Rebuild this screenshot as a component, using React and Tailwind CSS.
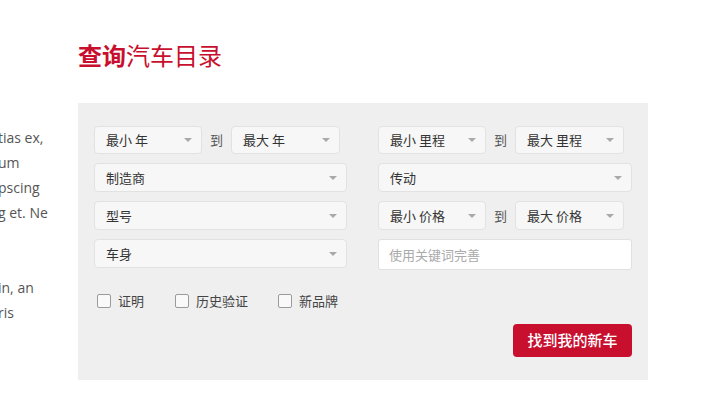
import React from "react";

const cjk = { fontFamily: '"Noto Sans CJK SC", "Noto Sans", sans-serif' };

function Arrow() {
  return (
    <svg width="8" height="4" viewBox="0 0 8 4" className="shrink-0">
      <path d="M0 0 L8 0 L4 4 Z" fill="#a9a9a9" />
    </svg>
  );
}

function Select({ label, w, h = "h-[29px]" }) {
  return (
    <div
      className={`${h} ${w} flex items-center justify-between pl-[11px] pr-[9px] bg-[#f7f7f7] border border-[#e2e2e2] rounded-[4px] text-[13px] text-[#333]`}
    >
      <span className="whitespace-pre">{label}</span>
      <Arrow />
    </div>
  );
}

function RangeRow({ a, b, h = "h-[29px]" }) {
  return (
    <div className="flex items-center">
      <Select label={a} w="w-[108px]" h={h} />
      <span className="w-[29px] text-center text-[13px] text-[#555]">到</span>
      <Select label={b} w="w-[109px]" h={h} />
    </div>
  );
}

function Check({ label, gap }) {
  return (
    <div className={`flex items-center ${gap}`}>
      <span className="w-[14px] h-[14px] border border-[#9a9a9a] rounded-[2px] bg-[#f9f9f9]" />
      <span className="ml-[7px] text-[13px] text-[#444]">{label}</span>
    </div>
  );
}

export default function App() {
  const lines = ["tias ex,", "um", "pscing", "g et. Ne", "", "", "in, an", "ris"];
  return (
    <div className="w-[710px] h-[411px] bg-white overflow-hidden flex" style={cjk}>
      <div className="w-[78px] shrink-0 overflow-hidden pt-[125px]">
        {lines.map((l, i) => (
          <div
            key={i}
            className="h-[25px] leading-[25px] text-[14px] text-[#555] whitespace-nowrap -ml-[2px]"
            style={{ fontFamily: '"Open Sans", sans-serif' }}
          >
            {l}
          </div>
        ))}
      </div>
      <div className="flex flex-col">
        <h1 className="mt-[40px] h-[30px] leading-[30px] text-[24px] text-[#c8102e]">
          <span className="font-bold">查询</span>汽车目录
        </h1>
        <div className="mt-[33px] w-[570px] h-[277px] bg-[#efefef] pt-[23px] px-[16px] flex flex-col">
          <div className="flex gap-[31px]">
            <div className="w-[253px] flex flex-col gap-[9px]">
              <RangeRow a="最小 年" b="最大 年" h="h-[28px]" />
              <Select label="制造商" w="w-[253px]" />
              <Select label="型号" w="w-[253px]" />
              <Select label="车身" w="w-[253px]" />
            </div>
            <div className="w-[254px] flex flex-col gap-[9px]">
              <RangeRow a="最小 里程" b="最大 里程" h="h-[28px]" />
              <Select label="传动" w="w-[254px]" />
              <RangeRow a="最小 价格" b="最大 价格" />
              <div className="h-[31px] w-[254px] flex items-center pl-[10px] bg-white border border-[#e0e0e0] rounded-[3px] text-[13px] text-[#aaa]">
                使用关键词完善
              </div>
            </div>
          </div>
          <div className="flex items-center mt-[21px] pl-[3px]">
            <Check label="证明" gap="mr-[31px]" />
            <Check label="历史验证" gap="mr-[30px]" />
            <Check label="新品牌" gap="" />
          </div>
          <div className="flex justify-end mt-[13px]">
            <button className="w-[119px] h-[33px] bg-[#c8102e] rounded-[4px] text-white text-[15px] font-medium">
              找到我的新车
            </button>
          </div>
        </div>
      </div>
    </div>
  );
}
